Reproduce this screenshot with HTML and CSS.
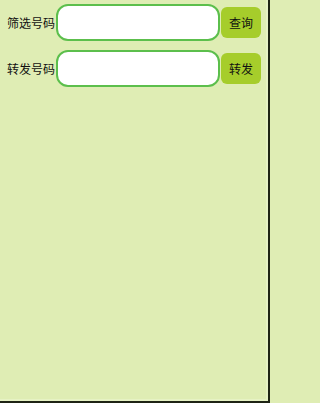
FILE: index.html
```html
<!DOCTYPE html>
<html lang="zh">
<head>
<meta charset="utf-8">
<title>号码</title>
<link rel="stylesheet" href="styles.css">
</head>
<body>
<div class="page">
  <div class="row">
    <span class="label">筛选号码</span>
    <input class="field" type="text">
    <button class="btn">查询</button>
  </div>
  <div class="row">
    <span class="label">转发号码</span>
    <input class="field" type="text">
    <button class="btn">转发</button>
  </div>
</div>
</body>
</html>
```
FILE: styles.css
```css
html, body {
  margin: 0;
  padding: 0;
  height: 100%;
}
body {
  background: #dfedb4;
  font-family: "Noto Sans CJK SC", "Noto Sans", sans-serif;
}
.page {
  box-sizing: border-box;
  width: 270px;
  height: 403px;
  padding: 4px 0 0 7px;
  background: #dfedb4;
  border-right: 2px solid #1e2414;
  border-bottom: 2px solid #1e2414;
  box-shadow: inset -2px -2px 0 #e6f2c4;
  display: flex;
  flex-direction: column;
  gap: 9px;
}
.row {
  display: flex;
  align-items: center;
  height: 37px;
}
.label {
  font-size: 12px;
  color: #111;
  width: 49px;
  line-height: 16px;
}
.field {
  box-sizing: border-box;
  width: 164px;
  height: 37px;
  margin: 0;
  border: 2px solid #5cbf4c;
  border-radius: 12px;
  background: #fff;
  outline: none;
  padding: 0 8px;
}
.btn {
  box-sizing: border-box;
  width: 40px;
  height: 31px;
  margin-left: 1px;
  border: none;
  border-radius: 6px;
  background: #a6cd2b;
  color: #111;
  font-family: "Noto Sans CJK SC", "Noto Sans", sans-serif;
  font-size: 12px;
  padding: 0;
}
```
